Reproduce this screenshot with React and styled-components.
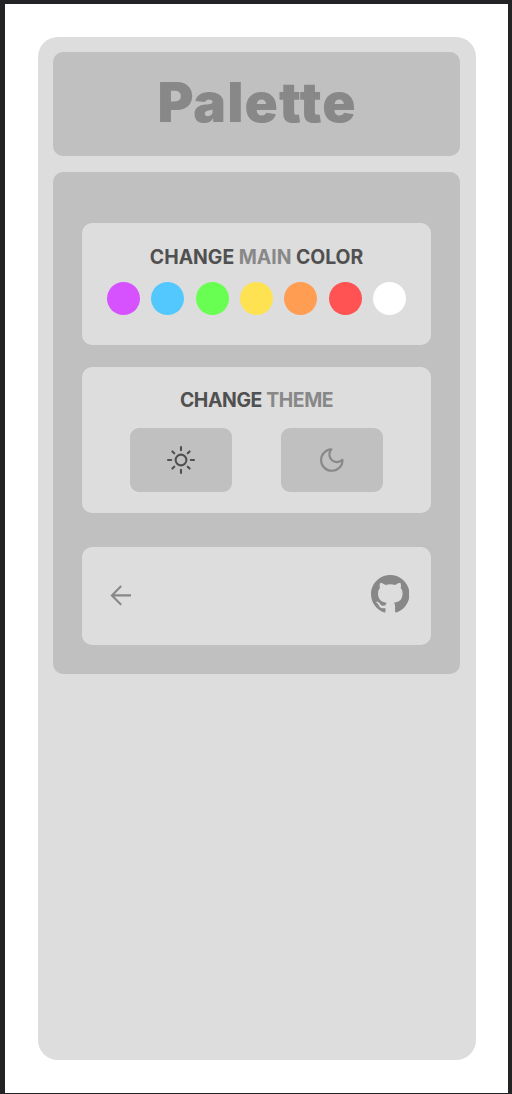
import React from 'react';
import styled, { createGlobalStyle } from 'styled-components';
import { BsGithub } from 'react-icons/bs';

const Global = createGlobalStyle`
  * { box-sizing: border-box; }
  body { margin: 0; background: #232326; font-family: Inter, "Open Sans", sans-serif; }
  h1, h2 { margin: 0; }
`;

const Page = styled.div`
  height: 1094px;
  padding: 4px 4px 1px 5px;
`;

const Screen = styled.main`
  height: 100%;
  padding: 32.6px 32.4px 32.8px 32.5px;
  background: #fff;
`;

const Shell = styled.div`
  display: flex;
  flex-direction: column;
  gap: 16.3px;
  height: 100%;
  padding: 15.2px;
  border-radius: 20px;
  background: #ddd;
`;

const Header = styled.header`
  display: flex;
  align-items: center;
  justify-content: center;
  flex: none;
  height: 104.3px;
  border-radius: 10px;
  background: #c0c0c0;
`;

const Title = styled.h1`
  padding: 0 0 2px 1px;
  color: #888;
  font-size: 55px;
  font-weight: 900;
  line-height: 1;
  letter-spacing: 1.1px;
  font-feature-settings: "calt" 0, "liga" 0;
`;

const Panel = styled.section`
  display: flex;
  flex-direction: column;
  flex: none;
  height: 501.4px;
  padding: 51.1px 29.3px 28.9px;
  border-radius: 10px;
  background: #c0c0c0;
`;

const Card = styled.section`
  flex: none;
  height: ${(p) => p.$height}px;
  margin-bottom: ${(p) => p.$gap}px;
  padding-top: ${(p) => p.$top}px;
  border-radius: 10px;
  background: #ddd;
`;

const Heading = styled.h2`
  color: #505050;
  font-size: 19.4px;
  font-weight: 700;
  line-height: 26px;
  letter-spacing: ${(p) => p.$spacing}px;
  text-align: center;
`;

const Accent = styled.span`
  color: #888;
`;

const Swatches = styled.div`
  display: flex;
  justify-content: space-between;
  padding: 11.4px 25px 0;
`;

const Swatch = styled.button`
  width: 33px;
  height: 33px;
  padding: 0;
  border: 0;
  border-radius: 50%;
  background: ${(p) => p.$color};
`;

const Themes = styled.div`
  display: flex;
  justify-content: center;
  gap: 49.3px;
  padding-top: 14.4px;
`;

const ThemeButton = styled.button`
  display: flex;
  align-items: center;
  justify-content: center;
  width: 102px;
  height: 64.5px;
  padding: 0;
  border: 0;
  border-radius: 9px;
  background: #c0c0c0;
  color: ${(p) => (p.$active ? '#505050' : '#888')};
`;

const Footer = styled.footer`
  display: flex;
  align-items: center;
  justify-content: space-between;
  flex: none;
  height: 98px;
  padding: 0 22px 1.8px 24px;
  border-radius: 10px;
  background: #ddd;
  color: #888;
`;

const Icon = styled.svg`
  display: block;
  fill: none;
  stroke: currentColor;
  stroke-width: 2.1;
`;

const SunIcon = () => (
  <Icon width="30" height="30" viewBox="0 0 30 30" strokeLinecap="round">
    <circle cx="15" cy="15" r="5.4" />
    <path d="M15 2v3.2M15 24.8V28M2 15h3.2M24.8 15H28M6.4 6.4l1.9 1.9M21.7 21.7l1.9 1.9M6.4 23.6l1.9-1.9M21.7 8.3l1.9-1.9" />
  </Icon>
);

const MoonIcon = () => (
  <Icon width="26" height="26" viewBox="0 0 26 26" strokeLinejoin="round">
    <path d="M12.4 2.4A10.7 10.7 0 1 0 23.5 12.9C20 15.9 15.5 15.8 12.7 13C9.8 10.1 9.5 5.6 12.4 2.4Z" />
  </Icon>
);

const ArrowIcon = () => (
  <Icon width="30" height="30" viewBox="0 0 30 30">
    <path d="M25 15.4H5.8M15.2 6L5.9 15.4L15.2 24.8" />
  </Icon>
);

const colors = ['#d652ff', '#52c8ff', '#69ff52', '#ffe252', '#ff9d52', '#ff5252', '#fff'];

export default function App() {
  return (
    <Page>
      <Global />
      <Screen>
        <Shell>
          <Header>
            <Title>Palette</Title>
          </Header>
          <Panel>
            <Card $height={121.6} $gap={21.6} $top={21}>
              <Heading $spacing={-0.02}>CHANGE <Accent>MAIN</Accent> COLOR</Heading>
              <Swatches>
                {colors.map((color) => <Swatch key={color} $color={color} />)}
              </Swatches>
            </Card>
            <Card $height={146.7} $gap={33.2} $top={20.6}>
              <Heading $spacing={-0.4}>CHANGE <Accent>THEME</Accent></Heading>
              <Themes>
                <ThemeButton $active aria-label="Light theme"><SunIcon /></ThemeButton>
                <ThemeButton aria-label="Dark theme"><MoonIcon /></ThemeButton>
              </Themes>
            </Card>
            <Footer>
              <ArrowIcon />
              <BsGithub size={38.5} />
            </Footer>
          </Panel>
        </Shell>
      </Screen>
    </Page>
  );
}
